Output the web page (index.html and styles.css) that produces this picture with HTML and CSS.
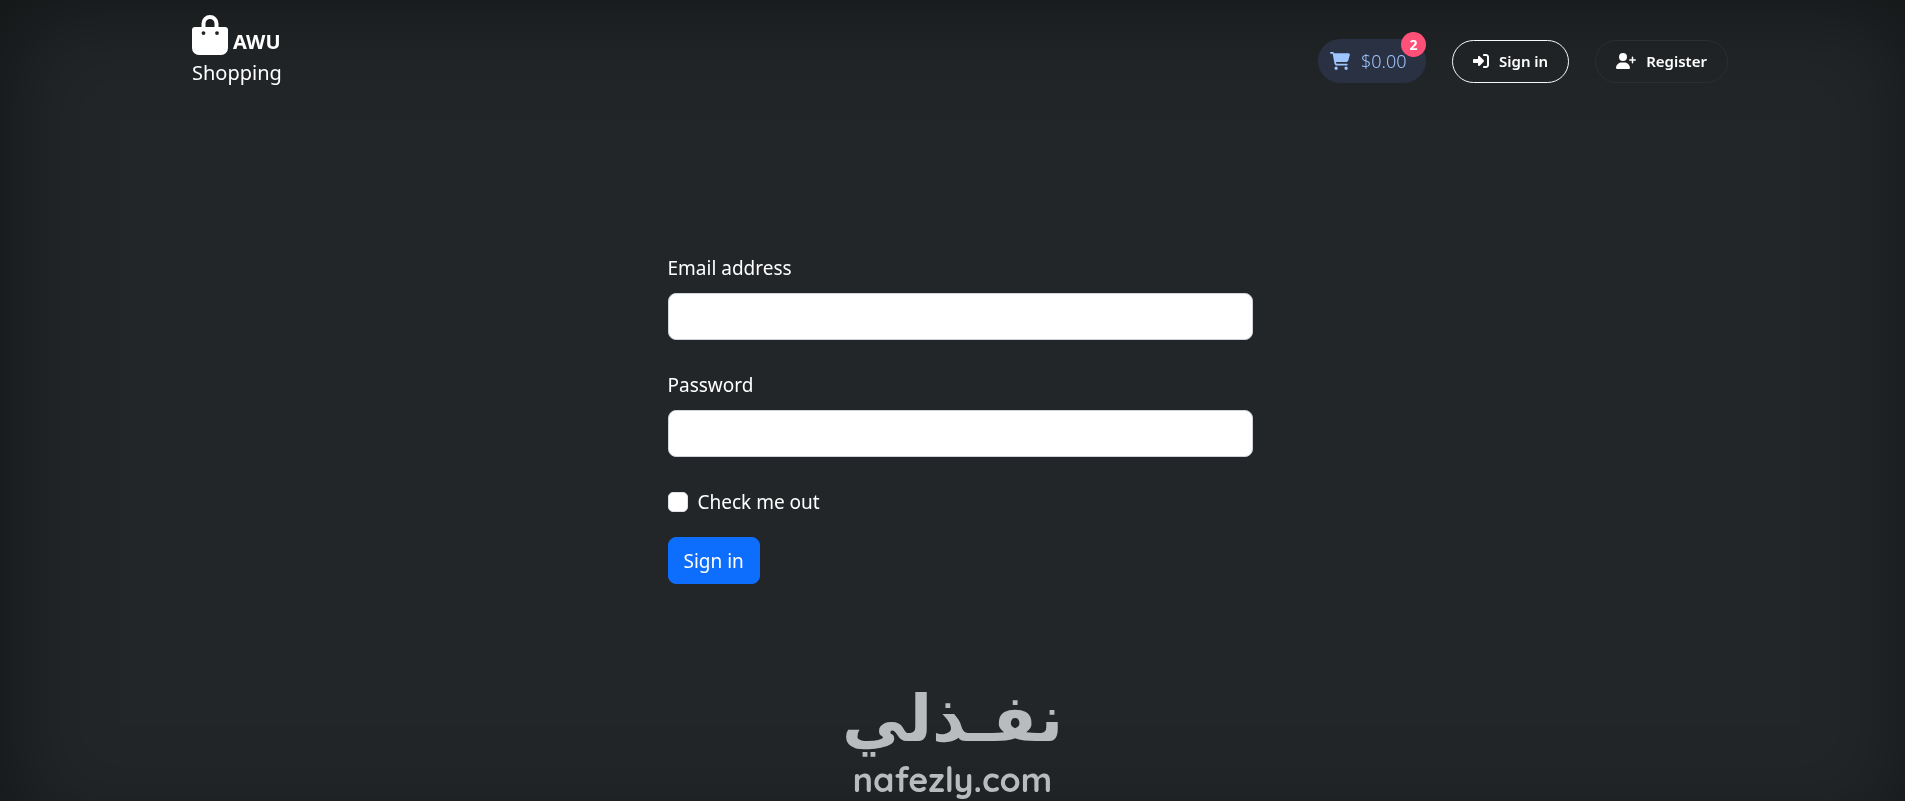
FILE: index.html
```html
<!DOCTYPE html>
<html lang="en">
<head>
<meta charset="utf-8">
<meta name="viewport" content="width=device-width, initial-scale=1">
<title>AWU Shopping</title>
<link rel="stylesheet" href="styles.css">
</head>
<body>
<header class="navbar">
  <a class="brand" href="#">
    <span class="brand-top">
      <svg class="brand-icon" viewBox="0 0 36 40" aria-hidden="true">
        <path class="bag-handle" d="M11.500 14V8.500a6.500 6.500 0 0 1 13 0v5.500"/>
        <path fill-rule="evenodd" d="M3 12h30a3 3 0 0 1 3 3v18a7 7 0 0 1-7 7H7a7 7 0 0 1-7-7V15a3 3 0 0 1 3-3zM11.500 16.200a1.900 1.900 0 1 0 0 3.800a1.900 1.900 0 0 0 0-3.800zM25 16.200a1.900 1.900 0 1 0 0 3.800a1.900 1.900 0 0 0 0-3.800z"/>
      </svg>
      <strong>AWU</strong>
    </span>
    <span class="brand-sub">Shopping</span>
  </a>
  <nav class="actions">
    <a class="cart" href="#">
      <svg class="cart-icon" viewBox="0 0 576 512" aria-hidden="true"><path d="M0 24C0 10.700 10.700 0 24 0H69.500c22 0 41.500 12.800 50.600 32h411c26.300 0 45.500 25 38.600 50.400l-41 152.300c-8.500 31.400-37 53.300-69.500 53.300H170.700l5.400 28.500c2.200 11.300 12.100 19.500 23.600 19.500H488c13.300 0 24 10.700 24 24s-10.700 24-24 24H199.700c-34.600 0-64.300-24.600-70.700-58.500L77.400 54.500c-.7-3.800-4-6.500-7.900-6.500H24C10.700 48 0 37.300 0 24zM128 464a48 48 0 1 1 96 0 48 48 0 1 1-96 0zm336-48a48 48 0 1 1 0 96 48 48 0 1 1 0-96z"/></svg>
      <span>$0.00</span>
      <span class="badge">2</span>
    </a>
    <button class="pill pill-light" type="button">
      <svg class="login-icon" viewBox="0 0 512 512" aria-hidden="true"><path d="M352 96h64c17.700 0 32 14.300 32 32v256c0 17.700-14.300 32-32 32h-64c-17.700 0-32 14.300-32 32s14.300 32 32 32h64c53 0 96-43 96-96V128c0-53-43-96-96-96h-64c-17.700 0-32 14.300-32 32s14.300 32 32 32zM342.600 278.600c12.500-12.500 12.500-32.800 0-45.300l-128-128c-9.200-9.200-22.900-11.900-34.900-6.900S160 115.100 160 128v64H32c-17.700 0-32 14.300-32 32v64c0 17.700 14.300 32 32 32h128v64c0 12.900 7.800 24.600 19.800 29.600s25.700 2.200 34.900-6.900l128-128z"/></svg>
      Sign in
    </button>
    <button class="pill pill-dark" type="button">
      <svg class="user-icon" viewBox="0 0 640 512" aria-hidden="true"><path d="M96 128a128 128 0 1 1 256 0A128 128 0 1 1 96 128zM0 482.300C0 383.800 79.800 304 178.300 304h91.400C368.200 304 448 383.800 448 482.300c0 16.400-13.300 29.700-29.700 29.700H29.700C13.300 512 0 498.700 0 482.300zM504 312V248H440c-13.300 0-24-10.700-24-24s10.700-24 24-24h64V136c0-13.300 10.700-24 24-24s24 10.700 24 24v64h64c13.300 0 24 10.700 24 24s-10.700 24-24 24H552v64c0 13.300-10.700 24-24 24s-24-10.700-24-24z"/></svg>
      Register
    </button>
  </nav>
</header>
<main class="content">
  <form class="login">
    <div class="field">
      <label for="email">Email address</label>
      <input class="control" type="email" id="email">
    </div>
    <div class="field">
      <label for="password">Password</label>
      <input class="control" type="password" id="password">
    </div>
    <div class="check">
      <input type="checkbox" id="check">
      <label for="check">Check me out</label>
    </div>
    <button class="submit" type="submit">Sign in</button>
  </form>
</main>
<div class="watermark">
  <span class="watermark-ar" lang="ar" dir="rtl">نفـذلي</span>
  <span class="watermark-en">nafezly.com</span>
</div>
</body>
</html>
```
FILE: styles.css
```css
* { box-sizing: border-box; }
html { background: #222628; }
body {
  margin: 0;
  min-height: 100vh;
  padding-left: 15px;
  color: #fff;
  font: 19px/30px "Segoe UI", "Noto Sans", "Open Sans", sans-serif;
}
/* Dark vignette behind the page */
body::before {
  content: "";
  position: fixed;
  inset: 0 -15px -45px 0;
  z-index: -1;
  box-shadow: inset 0 0 100px rgba(0, 0, 0, .5);
}
.navbar {
  display: flex;
  justify-content: space-between;
  align-items: center;
  width: 82%;
  max-width: 1536px;
  margin: 0 auto;
  padding: 15px 0 12px;
}
.brand {
  display: flex;
  flex-direction: column;
  color: #fff;
  text-decoration: none;
}
.brand-top { display: flex; align-items: flex-end; gap: 5px; }
.brand-top strong { font-size: 20px; line-height: 26px; }
.brand-icon { width: 36px; height: 40px; fill: #fff; }
.bag-handle { fill: none; stroke: #fff; stroke-width: 4; }
.brand-sub { line-height: 36px; font-size: 20px; }
.actions { display: flex; align-items: center; gap: 26px; padding-top: 16px; }
.cart {
  position: relative;
  display: flex;
  align-items: center;
  gap: 11px;
  width: 108px;
  height: 44px;
  padding-left: 12px;
  border-radius: 22px;
  background: #293143;
  color: #9ec5fe;
  font-size: 18px;
  font-weight: 300;
  text-decoration: none;
}
.cart-icon { width: 20px; height: 18px; fill: currentColor; }
.badge {
  position: absolute;
  top: -7px;
  right: 0;
  width: 25px;
  height: 25px;
  border-radius: 50%;
  background: #ff5178;
  color: #fff;
  font-size: 14px;
  font-weight: 700;
  line-height: 25px;
  text-align: center;
}
.pill {
  display: flex;
  align-items: center;
  gap: 10px;
  height: 43px;
  padding: 0 20px;
  border: 1px solid #f8f9fa;
  border-radius: 22px;
  background: transparent;
  color: #fff;
  font: 600 15px/22px "Segoe UI", "Noto Sans", "Open Sans", sans-serif;
}
.pill svg { height: 16px; fill: currentColor; }
.pill-dark { border-color: #2b2f34; }
.login-icon { width: 16px; }
.user-icon { width: 20px; }
.content { display: flex; justify-content: center; padding: 150px 24px 0; }
.login { width: 100%; max-width: 585px; }
.field { display: flex; flex-direction: column; gap: 10px; margin-bottom: 30px; }
.control {
  width: 100%;
  height: 47px;
  padding: 8px 15px;
  border: 1px solid #ced4da;
  border-radius: 8px;
  background: #fff;
  font: inherit;
}
.check { display: flex; align-items: center; gap: 10px; margin-bottom: 20px; }
.check input {
  appearance: none;
  width: 20px;
  height: 20px;
  margin: 0;
  border: 1px solid #dee2e6;
  border-radius: 5px;
  background: #fff;
}
.check input:checked { background: #0d6efd; }
.submit {
  height: 47px;
  padding: 0 15px;
  border: 1px solid #0d6efd;
  border-radius: 8px;
  background: #0d6efd;
  color: #fff;
  font: inherit;
}
.watermark {
  position: absolute;
  bottom: 0;
  left: 0;
  right: 0;
  display: flex;
  flex-direction: column;
  align-items: center;
  color: #b9bcbe;
  pointer-events: none;
}
.watermark-ar { font: 700 65px/80px "DejaVu Sans", sans-serif; }
.watermark-en { font: 700 34px/42px Quicksand, Lato, sans-serif; }
```
